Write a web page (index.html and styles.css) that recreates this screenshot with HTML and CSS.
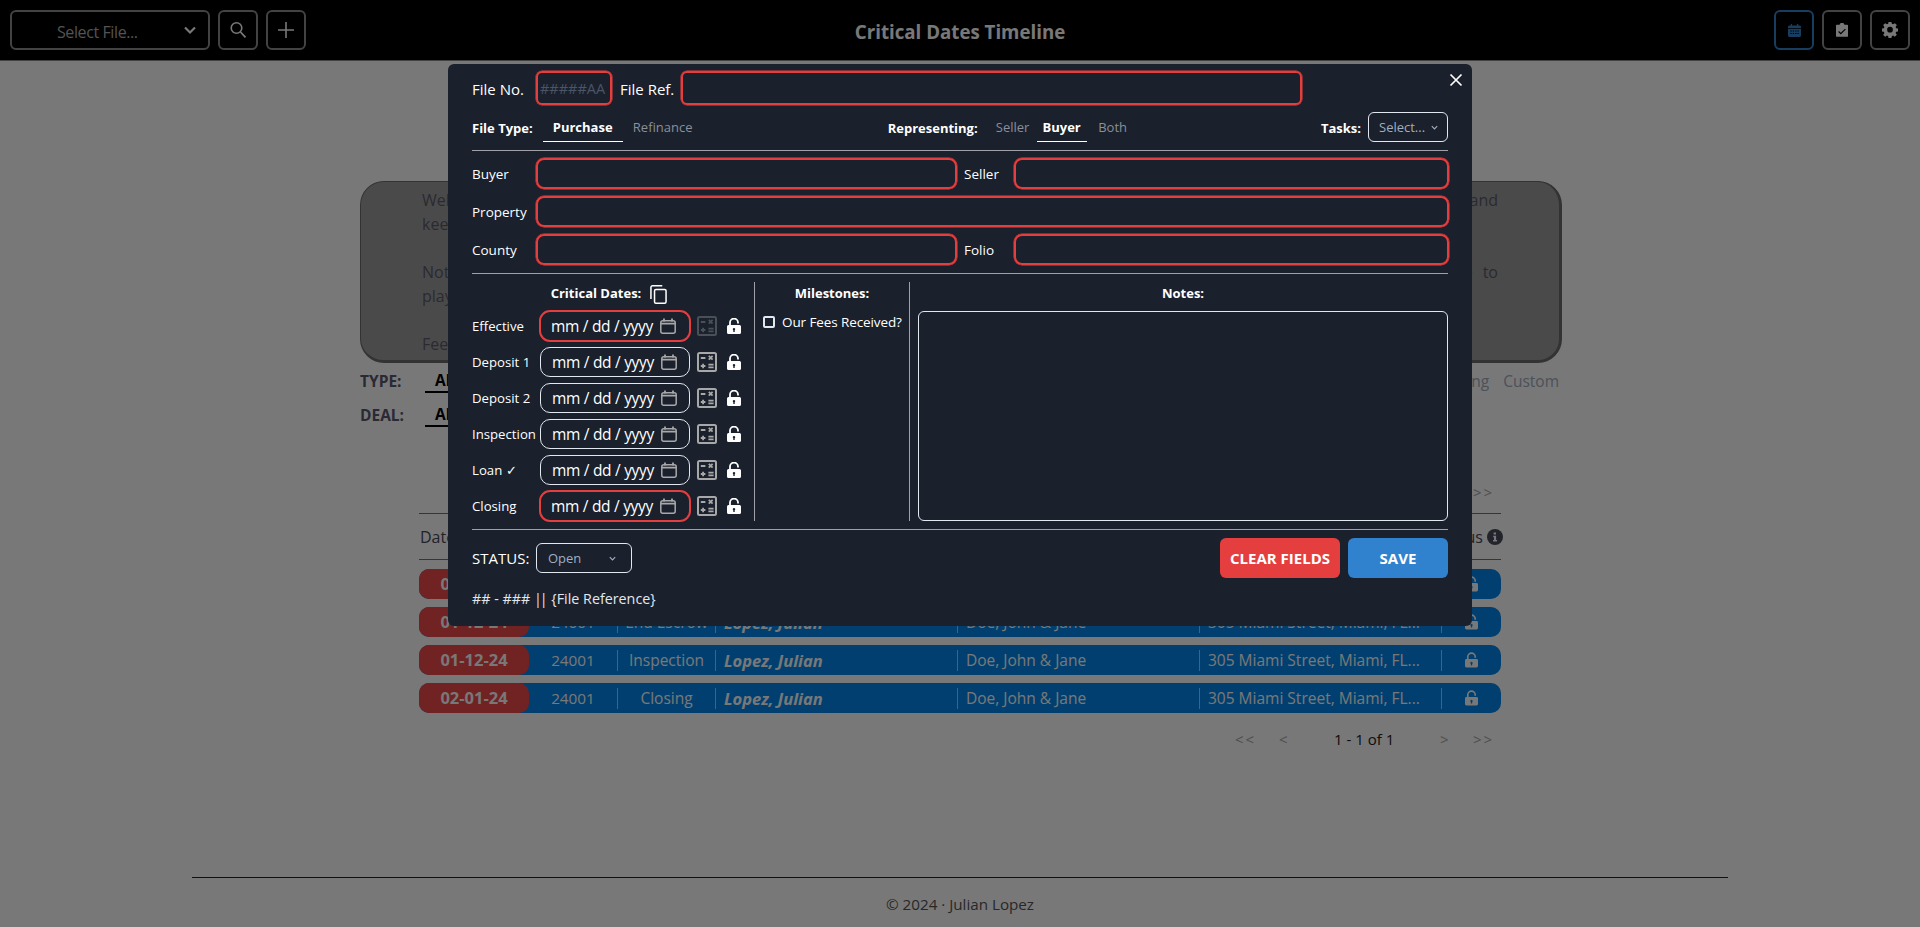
FILE: index.html
```html
<!DOCTYPE html>
<html lang="en">
<head>
  <meta charset="utf-8">
  <meta name="viewport" content="width=device-width, initial-scale=1.0">
  <title>Critical Dates Timeline</title>
  <link rel="stylesheet" href="styles.css">
</head>
<body>
  <!-- shared icons -->
  <svg class="icon-defs" width="0" height="0">
    <symbol id="i-lock" viewBox="0 0 14 16">
      <path d="M3 8V4.600a4 4 0 0 1 8 0V5.600" fill="none" stroke="currentColor" stroke-width="1.800"/>
      <path fill-rule="evenodd" d="M1.500 7h11A1.500 1.500 0 0 1 14 8.500v6a1.500 1.500 0 0 1-1.500 1.500h-11A1.500 1.500 0 0 1 0 14.500v-6A1.500 1.500 0 0 1 1.500 7zM7 10a1.200 1.200 0 0 0-.7 2.200V14h1.400v-1.800A1.200 1.200 0 0 0 7 10z" fill="currentColor"/>
    </symbol>
    <symbol id="i-cal" viewBox="0 0 16 16">
      <rect x=".8" y="2.800" width="14.400" height="12.400" rx="2" fill="none" stroke="#a8a8a8" stroke-width="1.500"/>
      <path d="M.8 5.600h14.400M4 .5v3M12 .5v3" stroke="#a8a8a8" stroke-width="1.800"/>
    </symbol>
    <symbol id="i-calc" viewBox="0 0 20 20">
      <rect x="1" y="1" width="18" height="18" rx="1.500" fill="none" stroke="currentColor" stroke-width="2"/>
      <path d="M3.800 6h4.600M3.800 14h4.600M6.100 11.700v4.600M11.800 3.800l3.800 3.800M15.600 3.800l-3.800 3.800M11.400 12.600h5.200M11.400 15.400h5.200" stroke="currentColor" stroke-width="1.800" fill="none"/>
    </symbol>
  </svg>

  <!-- Top bar -->
  <header class="topbar">
    <div class="topbar-left">
      <div class="file-select">
        <span>Select File...</span>
        <svg class="file-chevron" viewBox="0 0 16 16" width="16" height="16"><path d="M3 5.500l5 5 5-5" fill="none" stroke="#fff" stroke-width="2.200"/></svg>
      </div>
      <button class="icon-btn">
        <svg viewBox="0 0 20 20" width="20" height="20"><circle cx="8.500" cy="8" r="5.300" fill="none" stroke="#fff" stroke-width="1.600"/><path d="M12.500 12l5 5.400" stroke="#fff" stroke-width="1.800" fill="none"/></svg>
      </button>
      <button class="icon-btn">
        <svg viewBox="0 0 20 20" width="20" height="20"><path d="M10 2v16M2 10h16" stroke="#fff" stroke-width="1.600" fill="none"/></svg>
      </button>
    </div>
    <h1 class="topbar-title">Critical Dates Timeline</h1>
    <div class="topbar-right">
      <button class="icon-btn icon-btn-active">
        <svg viewBox="0 0 14 14" width="13" height="13"><path d="M3 0h1.400v1.500h5.200V0H11v1.500h1.500a1.500 1.500 0 0 1 1.500 1.500v1.500H0V3a1.500 1.500 0 0 1 1.500-1.500H3z" fill="#3182ce"/><path fill-rule="evenodd" d="M0 5.300h14v7.200a1.500 1.500 0 0 1-1.500 1.500h-11A1.500 1.500 0 0 1 0 12.500zM2.500 7v1.200h1.500V7zm2.600 0v1.200h1.500V7zm2.600 0v1.200h1.500V7zm2.500 0v1.200h1.500V7zM2.500 9.700v1.200h1.500V9.700zm2.600 0v1.200h1.500V9.700zm2.600 0v1.200h1.500V9.700zm2.500 0v1.200h1.500V9.700z" fill="#3182ce"/></svg>
      </button>
      <button class="icon-btn">
        <svg viewBox="0 0 14 16" width="12" height="14"><path fill-rule="evenodd" d="M1 1.800h3.200a2.900 2.900 0 0 1 5.600 0H13a1 1 0 0 1 1 1V15a1 1 0 0 1-1 1H1a1 1 0 0 1-1-1V2.800a1 1 0 0 1 1-1zm2.500 7.500L2.600 10.200l3 3 5.800-5.800-.9-.9-4.900 4.800z" fill="#fff"/></svg>
      </button>
      <button class="icon-btn">
        <svg viewBox="0 0 16 16" width="16" height="16"><path fill-rule="evenodd" d="M6.500 0h3l.4 2.200 1.300.6L13.100 1.500l2.100 2.100-1.300 1.900.6 1.300 2.200.4v3l-2.200.4-.6 1.300 1.300 1.900-2.100 2.100-1.900-1.300-1.300.6-.4 2.200h-3l-.4-2.200-1.300-.6-1.900 1.300L.8 13.900l1.300-1.900-.6-1.300L-.7 10.300v-3l2.200-.4.6-1.300L.8 3.600l2.100-2.100 1.900 1.300 1.300-.6zM8 5.400a3 3 0 1 0 0 6 3 3 0 0 0 0-6z" fill="#fff" transform="translate(.4 -.3) scale(.95)"/></svg>
      </button>
    </div>
  </header>

  <!-- Page behind the dialog -->
  <main class="page">
    <section class="welcome">
      <p>Welcome to the Critical Dates Timeline, a simple place to see every deadline on your files, stay organized, and</p>
      <p>keep your closings on track.</p>
      <p class="welcome-gap">Note that this is a demonstration version, so the data shown here is only sample data, and you are of course completely free to</p>
      <p>play around with it.</p>
      <p class="welcome-gap">Feel free to reach out with any feedback.</p>
    </section>

    <div class="filter-row filter-row-first">
      <span class="filter-label">TYPE:</span>
      <span class="filter-tab filter-tab-on">All</span>
      <span class="filter-end">
        <span class="filter-tab">Closing</span>
        <span class="filter-tab">Custom</span>
      </span>
    </div>
    <div class="filter-row">
      <span class="filter-label">DEAL:</span>
      <span class="filter-tab filter-tab-on">All</span>
    </div>

    <div class="table-wrap">
      <div class="pager pager-top">
        <span class="pager-arrow pager-first">&lt;&lt;</span>
        <span class="pager-arrow pager-prev">&lt;</span>
        <span class="pager-count">1 - 1 of 1</span>
        <span class="pager-arrow pager-next">&gt;</span>
        <span class="pager-arrow pager-last">&gt;&gt;</span>
      </div>

      <div class="table-head">
        <span>Date</span>
        <span class="table-status">Status
          <svg viewBox="0 0 16 16" width="16" height="16"><circle cx="8" cy="8" r="8" fill="#4c4c5c"/><path d="M6.600 3.400h2.400v2H6.600zM6.200 6.800h2.900v4.300h1v1.500H6v-1.500h1V8.300h-.8z" fill="#fff"/></svg>
        </span>
      </div>

      <div class="row">
        <span class="row-date">01-12-24</span><span class="cell cell-id">24001</span><span class="cell cell-event">Effective</span><span class="cell cell-name">Lopez, Julian</span><span class="cell cell-party">Doe, John &amp; Jane</span><span class="cell cell-party">305 Miami Street, Miami, FL...</span>
        <span class="cell cell-lock"><svg width="13" height="16"><use href="#i-lock"/></svg></span>
      </div>
      <div class="row">
        <span class="row-date">01-12-24</span><span class="cell cell-id">24001</span><span class="cell cell-event">End Escrow</span><span class="cell cell-name">Lopez, Julian</span><span class="cell cell-party">Doe, John &amp; Jane</span><span class="cell cell-party">305 Miami Street, Miami, FL...</span>
        <span class="cell cell-lock"><svg width="13" height="16"><use href="#i-lock"/></svg></span>
      </div>
      <div class="row">
        <span class="row-date">01-12-24</span><span class="cell cell-id">24001</span><span class="cell cell-event">Inspection</span><span class="cell cell-name">Lopez, Julian</span><span class="cell cell-party">Doe, John &amp; Jane</span><span class="cell cell-party">305 Miami Street, Miami, FL...</span>
        <span class="cell cell-lock"><svg width="13" height="16"><use href="#i-lock"/></svg></span>
      </div>
      <div class="row">
        <span class="row-date">02-01-24</span><span class="cell cell-id">24001</span><span class="cell cell-event">Closing</span><span class="cell cell-name">Lopez, Julian</span><span class="cell cell-party">Doe, John &amp; Jane</span><span class="cell cell-party">305 Miami Street, Miami, FL...</span>
        <span class="cell cell-lock"><svg width="13" height="16"><use href="#i-lock"/></svg></span>
      </div>

      <div class="pager pager-bottom">
        <span class="pager-arrow pager-first">&lt;&lt;</span>
        <span class="pager-arrow pager-prev">&lt;</span>
        <span class="pager-count">1 - 1 of 1</span>
        <span class="pager-arrow pager-next">&gt;</span>
        <span class="pager-arrow pager-last">&gt;&gt;</span>
      </div>
    </div>
  </main>

  <footer class="footer">© 2024 · Julian Lopez</footer>

  <!-- New file dialog -->
  <div class="overlay">
    <div class="modal">
      <button class="modal-close">
        <svg viewBox="0 0 14 14" width="14" height="14"><path d="M1.500 1.500l11 11M12.500 1.500l-11 11" stroke="#fff" stroke-width="1.700" fill="none"/></svg>
      </button>

      <div class="file-row">
        <label class="file-label file-label-no">File No.</label>
        <input class="field field-bad field-no" type="text" placeholder="#####AA">
        <label class="file-label file-label-ref">File Ref.</label>
        <input class="field field-bad field-ref" type="text">
      </div>

      <div class="choice-row">
        <b class="choice-label">File Type:</b>
        <span class="tab tab-on tab-purchase">Purchase</span>
        <span class="tab tab-refinance">Refinance</span>
        <b class="choice-label choice-rep">Representing:</b>
        <span class="tab tab-seller">Seller</span>
        <span class="tab tab-on tab-buyer">Buyer</span>
        <span class="tab tab-both">Both</span>
        <b class="choice-label choice-tasks">Tasks:</b>
        <div class="mini-select mini-tasks">Select...<svg viewBox="0 0 10 10" width="9" height="9"><path d="M2 3.500l3 3 3-3" fill="none" stroke="#a0aec0" stroke-width="1.300"/></svg></div>
      </div>

      <hr class="rule">

      <div class="party-row">
        <label class="party-label">Buyer</label>
        <input class="field field-bad field-half" type="text">
        <label class="party-label party-label-r">Seller</label>
        <input class="field field-bad field-half-r" type="text">
      </div>
      <div class="party-row">
        <label class="party-label">Property</label>
        <input class="field field-bad field-wide" type="text">
      </div>
      <div class="party-row">
        <label class="party-label">County</label>
        <input class="field field-bad field-half" type="text">
        <label class="party-label party-label-r">Folio</label>
        <input class="field field-bad field-half-r" type="text">
      </div>

      <hr class="rule">

      <div class="columns">
        <div class="col-dates">
          <div class="col-title col-title-dates">Critical Dates:
            <svg class="copy-icon" viewBox="0 0 18 20" width="17" height="19"><path d="M13 .8H2.600A1.600 1.600 0 0 0 1 2.400v12.400" fill="none" stroke="#fff" stroke-width="1.600"/><rect x="4.800" y="4.600" width="12.200" height="14.600" rx="1.500" fill="none" stroke="#fff" stroke-width="1.600"/></svg>
          </div>

          <div class="date-row">
            <span class="date-label">Effective</span>
            <div class="date-field date-field-bad"><span>mm / dd / yyyy</span><svg width="16" height="16"><use href="#i-cal"/></svg></div>
            <svg class="calc-icon calc-off" width="20" height="20"><use href="#i-calc"/></svg>
            <svg class="lock-icon" width="14" height="16"><use href="#i-lock"/></svg>
          </div>
          <div class="date-row">
            <span class="date-label">Deposit 1</span>
            <div class="date-field"><span>mm / dd / yyyy</span><svg width="16" height="16"><use href="#i-cal"/></svg></div>
            <svg class="calc-icon" width="20" height="20"><use href="#i-calc"/></svg>
            <svg class="lock-icon" width="14" height="16"><use href="#i-lock"/></svg>
          </div>
          <div class="date-row">
            <span class="date-label">Deposit 2</span>
            <div class="date-field"><span>mm / dd / yyyy</span><svg width="16" height="16"><use href="#i-cal"/></svg></div>
            <svg class="calc-icon" width="20" height="20"><use href="#i-calc"/></svg>
            <svg class="lock-icon" width="14" height="16"><use href="#i-lock"/></svg>
          </div>
          <div class="date-row">
            <span class="date-label">Inspection</span>
            <div class="date-field"><span>mm / dd / yyyy</span><svg width="16" height="16"><use href="#i-cal"/></svg></div>
            <svg class="calc-icon" width="20" height="20"><use href="#i-calc"/></svg>
            <svg class="lock-icon" width="14" height="16"><use href="#i-lock"/></svg>
          </div>
          <div class="date-row">
            <span class="date-label">Loan ✓</span>
            <div class="date-field"><span>mm / dd / yyyy</span><svg width="16" height="16"><use href="#i-cal"/></svg></div>
            <svg class="calc-icon" width="20" height="20"><use href="#i-calc"/></svg>
            <svg class="lock-icon" width="14" height="16"><use href="#i-lock"/></svg>
          </div>
          <div class="date-row">
            <span class="date-label">Closing</span>
            <div class="date-field date-field-bad"><span>mm / dd / yyyy</span><svg width="16" height="16"><use href="#i-cal"/></svg></div>
            <svg class="calc-icon" width="20" height="20"><use href="#i-calc"/></svg>
            <svg class="lock-icon" width="14" height="16"><use href="#i-lock"/></svg>
          </div>
        </div>

        <div class="col-miles">
          <div class="col-title">Milestones:</div>
          <label class="mile-check"><span class="mile-box"></span>Our Fees Received?</label>
        </div>

        <div class="col-notes">
          <div class="col-title">Notes:</div>
          <textarea class="notes"></textarea>
        </div>
      </div>

      <hr class="rule">

      <div class="foot-row">
        <span class="status-label">STATUS:</span>
        <div class="mini-select mini-status">Open<svg viewBox="0 0 10 10" width="9" height="9"><path d="M2 3.500l3 3 3-3" fill="none" stroke="#a0aec0" stroke-width="1.300"/></svg></div>
        <button class="btn btn-clear">CLEAR FIELDS</button>
        <button class="btn btn-save">SAVE</button>
      </div>
      <div class="file-preview">## - ### <span class="pipes">||</span> {File Reference}</div>
    </div>
  </div>
</body>
</html>
```

FILE: styles.css
```css
* {
  box-sizing: border-box;
}

body {
  margin: 0;
  height: 927px;
  overflow: hidden;
  background: #fff;
  font-family: "Open Sans", "Noto Sans", sans-serif;
  font-size: 16px;
  color: #2d3748;
}
.icon-defs {
  display: block;
  height: 0;
}

/* top bar */
.topbar {
  display: flex;
  align-items: center;
  height: 61px;
  padding: 0 10px;
  background: #000;
  border-bottom: 1px solid #8f8f8f;
}
.topbar-left,
.topbar-right {
  display: flex;
  flex: 1;
  gap: 8px;
}
.topbar-right {
  justify-content: flex-end;
}
.topbar-title {
  margin: 0;
  padding-top: 2px;
  font-size: 18.700px;
  font-weight: 700;
  color: #fff;
}
.file-select {
  position: relative;
  width: 200px;
  height: 40px;
  padding-left: 45px;
  line-height: 40px;
  font-size: 16px;
  letter-spacing: -.4px;
  color: #b0b0b0;
  border: 2px solid #8f8f8f;
  border-radius: 6px;
}
.file-chevron {
  position: absolute;
  right: 10px;
  top: 10px;
}
.icon-btn {
  display: flex;
  align-items: center;
  justify-content: center;
  width: 40px;
  height: 40px;
  padding: 0;
  color: #fff;
  background: none;
  border: 2px solid #8f8f8f;
  border-radius: 6px;
}
.icon-btn-active {
  border-color: #3182ce;
}

/* page behind the dialog */
.page {
  display: flex;
  flex-direction: column;
  align-items: center;
  height: 816px;
  padding-top: 120px;
}
.welcome {
  width: 1202px;
  height: 182px;
  margin-left: 2px;
  padding: 6px 61px 0;
  background: #9e9e9e;
  border: 1px solid #6e6e6e;
  border-right-width: 3px;
  border-bottom-width: 3px;
  border-radius: 24px;
  color: #5a5a68;
}
.welcome p {
  margin: 0;
  line-height: 24px;
  text-align-last: justify;
  white-space: nowrap;
}
.welcome p:nth-child(2),
.welcome p:nth-child(4),
.welcome p:nth-child(5) {
  text-align-last: left;
}
.welcome-gap {
  padding-top: 24px;
}
.filter-row {
  display: flex;
  align-items: center;
  width: 1202px;
  height: 34px;
  margin-left: 2px;
}
.filter-row-first {
  margin-top: 1px;
}
.filter-label {
  width: 65px;
  font-weight: 700;
  font-size: 15.500px;
  color: #5a5a70;
}
.filter-tab {
  color: #a0aec0;
  font-size: 15.500px;
}
.filter-tab-on {
  width: 100px;
  padding: 0 10px;
  font-weight: 700;
  color: #000;
  line-height: 22px;
  border-bottom: 2px solid #000;
}
.filter-end {
  display: flex;
  gap: 14px;
  margin-left: auto;
  margin-right: 3px;
}
.table-wrap {
  width: 1082px;
  margin-top: 48px;
}
.pager {
  position: relative;
  height: 24px;
  line-height: 24px;
  font-size: 15px;
}
.pager-top {
  margin-bottom: 9px;
}
.pager-bottom {
  margin-top: 14px;
}
.pager-count {
  position: absolute;
  left: 915px;
  top: 0;
  color: #222;
}
.pager-arrow {
  position: absolute;
  top: 0;
  color: #a8a8a8;
  letter-spacing: 2px;
}
.pager-first { left: 816px; }
.pager-prev { left: 860px; }
.pager-next { left: 1021px; }
.pager-last { left: 1054px; }
.table-head {
  display: flex;
  align-items: center;
  justify-content: space-between;
  height: 47px;
  margin-bottom: 9px;
  padding-left: 1px;
  color: #4a4a58;
  border-top: 1px solid #e53e3e;
  border-bottom: 1px solid #e53e3e;
}
.table-status {
  display: flex;
  align-items: center;
  gap: 4px;
  margin-right: -2px;
}
.row {
  display: flex;
  align-items: center;
  height: 30px;
  margin-bottom: 8px;
  background: #0087ec;
  border-radius: 10px;
  color: #fff;
}
.row-date {
  width: 110px;
  height: 30px;
  line-height: 30px;
  text-align: center;
  font-size: 16.500px;
  font-weight: 700;
  background: #f04848;
  border-radius: 10px;
}
.cell {
  height: 21px;
  line-height: 21px;
  font-size: 15.500px;
  white-space: nowrap;
}
.cell-id {
  width: 88px;
  text-align: center;
  font-size: 15.300px;
}
.cell-event {
  width: 98px;
  text-align: center;
  border-left: 1px solid #b0c8dc;
}
.cell-name {
  width: 242px;
  padding-left: 8px;
  font-size: 16.500px;
  font-weight: 700;
  font-style: italic;
  border-left: 1px solid #b0c8dc;
}
.cell-party {
  width: 242px;
  padding-left: 8px;
  border-left: 1px solid #b0c8dc;
}
.cell-lock {
  display: flex;
  justify-content: center;
  align-items: center;
  width: 60px;
  color: #fff;
  border-left: 1px solid #b0c8dc;
}

.footer {
  width: 1536px;
  margin: 0 auto;
  padding-top: 16px;
  text-align: center;
  font-size: 15.200px;
  color: #555;
  border-top: 1px solid #222;
}

/* dialog */
.overlay {
  position: fixed;
  inset: 0;
  display: flex;
  justify-content: center;
  align-items: flex-start;
  padding-top: 64px;
  background: rgba(0, 0, 0, .53);
}
.modal {
  position: relative;
  width: 1024px;
  height: 562px;
  padding: 7px 24px 0;
  background: #1a202c;
  border-radius: 6px;
  color: #fff;
  font-size: 14px;
}
.modal-close {
  position: absolute;
  top: 9px;
  right: 9px;
  width: 14px;
  height: 14px;
  padding: 0;
  background: none;
  border: none;
}
.field {
  height: 31px;
  padding: 0 4px;
  background: transparent;
  color: #fff;
  border: 1px solid #e2e8f0;
  border-radius: 8px;
  outline: none;
  font-family: inherit;
}
.field-bad {
  border: 2px solid #e53e3e;
  box-shadow: 0 0 0 .5px #e53e3e;
}
.file-row {
  display: flex;
  align-items: center;
  height: 34px;
}
.file-label {
  padding-top: 1px;
  white-space: nowrap;
  font-size: 15px;
}
.file-label-no {
  width: 64px;
}
.file-label-ref {
  width: 61px;
  margin-left: 8px;
}
.field-no {
  width: 76px;
  height: 34px;
  padding: 0 2px;
  border-radius: 6px;
  font-size: 14.500px;
}
.field-no::placeholder {
  color: #4a5568;
  opacity: 1;
}
.field-ref {
  width: 621px;
  height: 34px;
  border-radius: 6px;
}
.choice-row {
  display: flex;
  align-items: center;
  height: 30px;
  margin-top: 7px;
  font-size: 13px;
}
.choice-label {
  padding-top: 1px;
  white-space: nowrap;
}
.choice-rep {
  margin-left: 185px;
}
.choice-tasks {
  margin-left: auto;
  margin-right: 7px;
}
.tab {
  height: 30px;
  line-height: 31px;
  text-align: center;
  color: #8a8f98;
}
.tab-on {
  font-weight: 700;
  color: #fff;
  border-bottom: 1.500px solid #fff;
}
.tab-purchase {
  width: 80px;
  margin-left: 10px;
}
.tab-refinance {
  width: 80px;
}
.tab-seller {
  width: 42px;
  margin-left: 14px;
}
.tab-buyer {
  width: 50px;
  margin-left: 3px;
}
.tab-both {
  width: 52px;
}
.mini-select {
  display: flex;
  align-items: center;
  justify-content: space-between;
  height: 30px;
  color: #a0aec0;
  border: 1px solid #e2e8f0;
  border-radius: 6px;
  font-size: 13px;
}
.mini-tasks {
  width: 80px;
  padding: 0 8px 0 10px;
}
.mini-status {
  width: 96px;
  padding: 0 14px 0 11px;
}
.rule {
  height: 1px;
  margin: 8px 0 0;
  background: #a0a0a8;
  border: none;
}
.party-row {
  display: flex;
  align-items: center;
  height: 31px;
  margin-top: 7px;
}
.party-label {
  width: 64px;
  padding-top: 1px;
  font-size: 13.500px;
}
.party-label-r {
  width: 57px;
  padding-left: 7px;
}
.field-half {
  width: 421px;
}
.field-half-r {
  width: 435px;
  margin-left: auto;
  margin-right: -1px;
}
.field-wide {
  width: 913px;
  margin-right: -1px;
}
.columns {
  display: flex;
  height: 239px;
  margin-top: 8px;
}
.col-dates {
  width: 283px;
  border-right: 1px solid #a0a0a8;
}
.col-miles {
  width: 155px;
  border-right: 1px solid #a0a0a8;
}
.col-notes {
  flex: 1;
  display: flex;
  flex-direction: column;
  padding-left: 8px;
}
.col-title {
  height: 29px;
  text-align: center;
  font-size: 13px;
  font-weight: 700;
  line-height: 22px;
}
.col-title-dates {
  display: flex;
  align-items: flex-start;
  justify-content: center;
  gap: 9px;
  padding-left: 23px;
  padding-right: 31px;
}
.copy-icon {
  flex: none;
  margin-top: 3px;
}
.date-row {
  display: flex;
  align-items: center;
  height: 30px;
  margin-bottom: 6px;
}
.date-label {
  width: 68px;
  font-size: 13.200px;
  white-space: nowrap;
}
.date-field {
  display: flex;
  align-items: center;
  justify-content: space-between;
  width: 150px;
  height: 30px;
  padding: 0 12px 0 11px;
  font-size: 15.500px;
  letter-spacing: -.3px;
  border: 1px solid #e2e8f0;
  border-radius: 10px;
}
.date-field-bad {
  width: 152px;
  height: 32px;
  margin: 0 -1px;
  padding: 0 13px 0 10px;
  border: 2px solid #e53e3e;
  border-radius: 11px;
}
.calc-icon {
  margin-left: 7px;
  color: #a8a8a8;
}
.calc-off {
  color: #4a4f58;
}
.lock-icon {
  margin-left: 10px;
  color: #fff;
}
.mile-check {
  display: flex;
  align-items: center;
  height: 20px;
  margin: 1px 0 0 8px;
  font-size: 13.500px;
  white-space: nowrap;
  letter-spacing: -.1px;
}
.mile-box {
  flex: none;
  width: 12px;
  height: 12px;
  margin-right: 7px;
  border: 2px solid #e2e8f0;
  border-radius: 2px;
}
.notes {
  flex: 1;
  margin: 0;
  background: transparent;
  border: 1px solid #e2e8f0;
  border-radius: 6px;
  resize: none;
}
.foot-row {
  display: flex;
  align-items: center;
  height: 40px;
  margin-top: 8px;
}
.status-label {
  width: 64px;
  font-size: 15px;
}
.btn {
  height: 40px;
  border: none;
  border-radius: 6px;
  color: #fff;
  font-family: inherit;
  font-size: 15px;
  font-weight: 700;
}
.btn-clear {
  width: 120px;
  margin-left: auto;
  background: #e53e3e;
}
.btn-save {
  width: 100px;
  margin-left: 8px;
  background: #3182ce;
}
.file-preview {
  margin-top: 11px;
  font-size: 14.300px;
  line-height: 20px;
  color: #e2e8f0;
}
.pipes {
  letter-spacing: -2px;
  padding-right: 2px;
}
```
